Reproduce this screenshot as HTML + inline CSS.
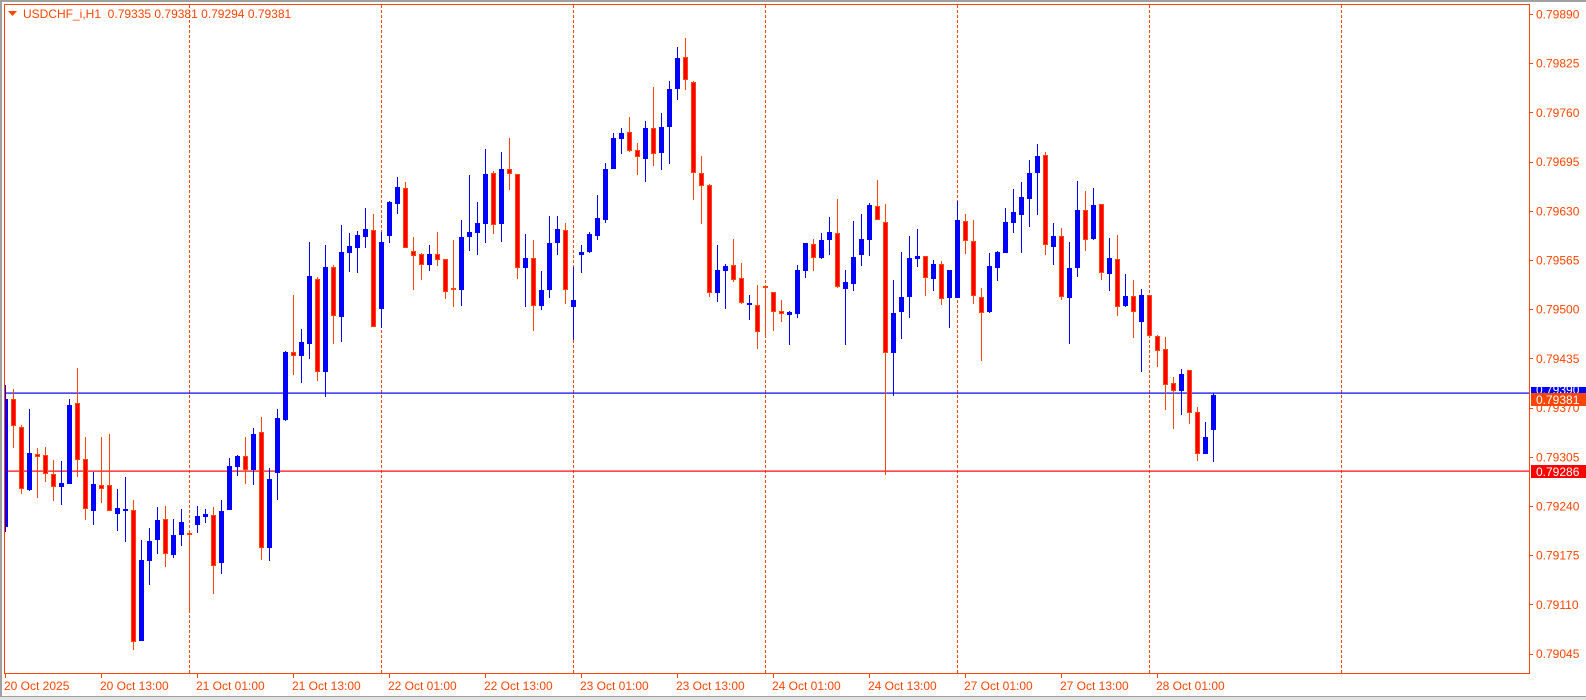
<!DOCTYPE html>
<html><head><meta charset="utf-8"><style>
html,body{margin:0;padding:0;background:#fff;width:1586px;height:700px;overflow:hidden}
svg{display:block}
text{font-family:"Liberation Sans",sans-serif;font-size:12px}
</style></head><body>
<svg id="s" width="1586" height="700" xmlns="http://www.w3.org/2000/svg">
<rect x="0" y="0" width="1586" height="700" fill="#fff"/>
<rect x="0" y="0" width="1586" height="2" fill="#a0a0a0"/>
<rect x="0" y="0" width="2" height="700" fill="#a0a0a0"/>
<rect x="0" y="697" width="1586" height="3" fill="#e0e0e0"/>
<rect x="0" y="696" width="1586" height="1" fill="#a0a0a0"/>
<g id="g"></g>
</svg>
<script>
var D=[
[1,399,527,385,532],[0,399,426,389,448],[0,427,489,425,494],[1,453,490,409,491],[0,454,457,448,498],
[0,455,474,447,482],[0,474,487,460,501],[1,483,487,461,505],[1,405,484,399,484],[0,403,460,368,477],
[0,459,509,437,520],[1,484,511,472,525],[0,485,489,437,503],[0,485,511,434,511],[1,508,514,489,531],
[1,509,511,477,542],[0,510,642,500,650],[1,560,641,540,641],[1,541,561,528,585],[1,520,540,507,554],
[0,519,554,506,567],[1,535,555,519,558],[1,522,535,509,546],[0,533,535,533,613],[1,516,525,506,533],
[1,514,517,509,523],[0,515,566,507,594],[1,511,563,500,574],[1,466,510,458,510],[1,456,467,455,476],
[0,456,470,437,484],[1,434,470,428,485],[0,432,548,417,560],[1,479,548,468,561],[1,418,473,409,500],
[1,352,420,351,421],[0,352,356,295,375],[1,342,356,329,383],[1,276,344,242,359],[0,279,372,277,381],
[1,267,372,245,397],[0,267,316,265,344],[1,252,317,225,342],[1,246,253,233,272],[1,235,248,231,273],
[1,229,237,208,248],[0,230,327,214,327],[1,242,309,232,328],[1,202,236,201,243],[1,187,204,177,214],
[0,188,248,182,248],[0,251,256,237,290],[0,254,265,253,280],[1,254,265,245,271],[0,254,260,232,266],
[0,259,292,259,299],[0,288,290,240,307],[1,237,290,220,306],[1,232,237,175,251],[1,223,233,202,255],
[1,174,224,149,243],[0,173,225,171,234],[1,169,224,152,242],[0,169,174,138,190],[0,174,268,174,279],
[1,258,268,234,307],[0,258,306,240,331],[1,290,306,271,310],[1,243,290,216,298],[1,229,243,216,255],
[0,230,290,223,304],[1,300,307,267,340],[1,252,255,245,273],[1,234,252,232,253],[1,218,236,195,240],
[1,169,220,163,223],[1,138,169,133,169],[1,133,139,128,154],[0,132,151,117,152],[0,150,157,143,175],
[1,128,159,121,182],[0,128,154,87,166],[1,127,153,113,170],[1,89,127,81,164],[1,58,89,47,100],
[0,57,80,38,90],[0,82,173,81,200],[0,173,186,156,224],[0,185,293,184,297],[1,270,293,245,302],
[1,266,271,264,309],[0,265,280,239,282],[0,278,303,263,304],[1,303,305,295,320],[0,305,332,285,349],
[0,286,288,286,337],[0,292,312,292,331],[0,311,314,300,322],[1,312,315,311,345],[1,270,314,265,318],
[1,243,271,243,278],[0,244,258,239,271],[1,240,258,233,259],[1,232,240,217,255],[0,233,287,199,288],
[1,282,289,270,345],[1,257,284,221,291],[1,239,255,214,266],[1,205,240,203,256],[0,206,220,180,220],
[0,222,353,204,475],[1,313,353,280,396],[1,297,312,252,339],[1,258,297,236,318],[1,256,259,229,267],
[0,256,278,256,296],[1,264,279,260,291],[0,264,299,261,305],[1,270,298,270,328],[1,220,298,201,298],
[0,221,241,214,254],[0,241,296,220,304],[0,297,313,288,361],[1,266,312,253,313],[1,252,268,251,281],
[1,222,253,208,253],[1,212,223,189,233],[1,197,215,182,253],[1,173,199,160,227],[1,156,173,144,215],
[0,155,245,152,255],[1,236,247,223,265],[0,236,297,228,300],[1,268,298,242,344],[1,210,268,181,277],
[0,210,240,191,251],[1,205,239,188,240],[0,204,273,204,280],[1,258,274,238,291],[0,259,307,235,316],
[1,296,306,274,307],[0,296,312,280,338],[1,295,322,289,372],[0,295,336,295,336],[0,336,351,335,367],
[0,349,385,337,410],[0,383,391,377,429],[1,374,391,369,415],[0,370,413,370,424],[0,412,454,407,461],
[1,437,454,422,454],[1,395,430,393,462]
];
var g=document.getElementById('g');
var h='';
h+='<defs><clipPath id="c"><rect x="5" y="5" width="1524" height="668"/></clipPath></defs>';
for(var k=0;k<7;k++){var x=189.5+192*k;h+='<line x1="'+x+'" y1="5" x2="'+x+'" y2="673" stroke="#ff4500" stroke-width="1" stroke-dasharray="3,2"/>';}
h+='<rect x="5" y="392.5" width="1524" height="1.2" fill="#0000ff"/>';
h+='<rect x="5" y="470.5" width="1524" height="1.2" fill="#ff0000"/>';
h+='<g clip-path="url(#c)">';
for(var i=0;i<D.length;i++){
 var d=D[i],cx=5+8*i,bx=3+8*i;
 var bh=Math.max(d[2]-d[1],2);
 if(d[0]==1){
  h+='<rect x="'+cx+'" y="'+d[3]+'" width="1" height="'+Math.max(d[4]-d[3],1)+'" fill="#0000ff"/>';
  h+='<rect x="'+bx+'" y="'+d[1]+'" width="5" height="'+bh+'" fill="#0000ff"/>';
 }else{
  h+='<rect x="'+cx+'" y="'+d[3]+'" width="1" height="'+Math.max(d[4]-d[3],1)+'" fill="#ff4500"/>';
  h+='<rect x="'+(bx+0.5)+'" y="'+(d[1]+0.5)+'" width="4" height="'+(bh-1)+'" fill="#ff0000" stroke="#ff4500" stroke-width="1"/>';
 }
}
h+='</g>';
h+='<rect x="4" y="4" width="1" height="670" fill="#ff4500"/>';
h+='<rect x="4" y="4" width="1526" height="1" fill="#ff4500"/>';
h+='<rect x="1529" y="4" width="1" height="670" fill="#ff4500"/>';
h+='<rect x="4" y="673" width="1526" height="1" fill="#ff4500"/>';
var P=['0.79890','0.79825','0.79760','0.79695','0.79630','0.79565','0.79500','0.79435','0.79370','0.79305','0.79240','0.79175','0.79110','0.79045'];
for(var k=0;k<P.length;k++){var y=14+49.2*k;
 h+='<rect x="1530" y="'+Math.round(y)+'" width="3" height="1" fill="#ff4500"/>';
 h+='<text x="1536" y="'+(y+4.5)+'" fill="#ff4500">'+P[k]+'</text>';}
h+='<rect x="1531" y="387" width="55" height="8" fill="#0000ff"/>';
h+='<text x="1536" y="394" fill="#fff">0.79390</text>';
h+='<rect x="1531" y="393" width="55" height="13" fill="#ff4500"/>';
h+='<text x="1536" y="404" fill="#fff">0.79381</text>';
h+='<rect x="1531" y="465" width="55" height="13" fill="#ff0000"/>';
h+='<text x="1536" y="476" fill="#fff">0.79286</text>';
var T=['20 Oct 2025','20 Oct 13:00','21 Oct 01:00','21 Oct 13:00','22 Oct 01:00','22 Oct 13:00','23 Oct 01:00','23 Oct 13:00','24 Oct 01:00','24 Oct 13:00','27 Oct 01:00','27 Oct 13:00','28 Oct 01:00'];
for(var k=0;k<T.length;k++){var x=5+96*k;
 h+='<rect x="'+x+'" y="674" width="1" height="4" fill="#ff4500"/>';
 h+='<text x="'+(x-1)+'" y="690" fill="#ff4500">'+T[k]+'</text>';}
h+='<path d="M8 11 L17 11 L12.5 16 Z" fill="#ff4500"/>';
h+='<text x="23" y="18" fill="#ff4500">USDCHF_i,H1&#160;&#160;0.79335 0.79381 0.79294 0.79381</text>';
g.innerHTML=h;
</script>
</body></html>
